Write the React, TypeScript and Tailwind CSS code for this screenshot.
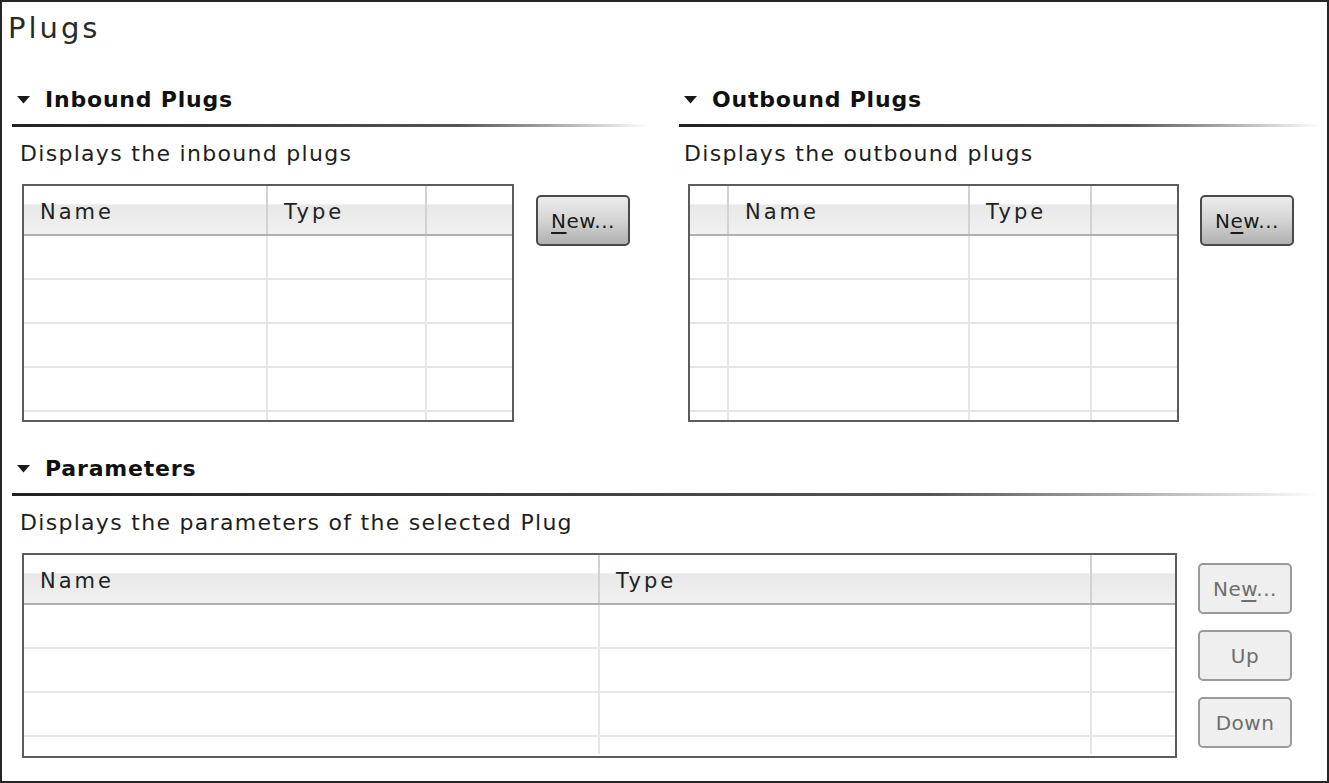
import React from 'react'

const Caret: React.FC = () => (
    <svg width="13" height="8" viewBox="0 0 13 8" className="shrink-0">
        <path d="M0 0 L13 0 L6.5 7.5 Z" fill="#1a1a1a" />
    </svg>
)

const SectionHeader: React.FC<{ title: string }> = ({ title }) => (
    <div>
        <div className="flex items-center h-[28px] pl-[5px] gap-[15px]">
            <Caret />
            <span className="text-[22px] font-bold text-[#111] leading-[28px] tracking-[0.8px]">{title}</span>
        </div>
        <div className="mt-[10px] h-[3px] bg-gradient-to-r from-[#222] via-[#555] via-70% to-transparent" />
    </div>
)

type TableProps = {
    cols: number[]
    labels: string[]
    rows: number
    lastRow: number
    height: number
}

const Table: React.FC<TableProps> = ({ cols, labels, rows, lastRow, height }) => {
    const cell = (i: number, header: boolean, content?: string) => {
        const last = i === cols.length
        return (
            <div
                key={i}
                className={
                    (last ? 'flex-1 ' : 'shrink-0 border-r-2 ') +
                    (header ? 'border-[#d2d2d2] ' : 'border-[#e6e6e6] ') +
                    'h-full flex items-center'
                }
                style={last ? undefined : { width: cols[i] }}
            >
                {content ? (
                    <span className="pl-[16px] pt-[5px] text-[21px] tracking-[3px] text-[#222]">{content}</span>
                ) : null}
            </div>
        )
    }

    return (
        <div className="border-2 border-[#5c5c5c] bg-white flex flex-col overflow-hidden" style={{ height }}>
            <div className="h-[50px] shrink-0 flex border-b-2 border-[#b0b0b0] bg-[linear-gradient(to_bottom,#ffffff_0%,#ffffff_36%,#e8e8e8_40%,#f1f1f1_100%)]">
                {[...cols, 0].map((_, i) => cell(i, true, labels[i]))}
            </div>
            {Array.from({ length: rows }).map((_, r) => (
                <div key={r} className="h-[44px] shrink-0 flex border-b-2 border-[#e6e6e6]">
                    {[...cols, 0].map((_, i) => cell(i, false))}
                </div>
            ))}
            <div className="flex" style={{ height: lastRow }}>
                {[...cols, 0].map((_, i) => cell(i, false))}
            </div>
        </div>
    )
}

const Button: React.FC<{ children: React.ReactNode; disabled?: boolean }> = ({ children, disabled }) => (
    <button
        className={
            'w-[94px] h-[51px] rounded-[5px] border-2 text-[20px] tracking-[0.5px] flex items-center justify-center ' +
            (disabled
                ? 'border-[#9a9a9a] bg-[#efefef] text-[#6e6e6e]'
                : 'border-[#4a4a4a] bg-gradient-to-b from-[#ececec] via-[#d4d4d4] to-[#b0b0b0] text-[#1a1a1a]')
        }
    >
        {children}
    </button>
)

const App: React.FC = () => {
    return (
        <div
            className="w-[1329px] h-[783px] border-2 border-[#262626] bg-white overflow-hidden text-[#1e1e1e]"
            style={{ fontFamily: '"DejaVu Sans", "Noto Sans", sans-serif' }}
        >
            <div className="pl-[6px] pt-[8px] h-[84px] text-[29px] leading-[36px] tracking-[3px] text-[#2a2a2a]">Plugs</div>

            <div className="flex pl-[10px] pr-[6px] gap-[29px]">
                <div className="w-[638px]">
                    <SectionHeader title="Inbound Plugs" />
                    <div className="pl-[8px] mt-[13px] h-[28px] text-[22px] leading-[28px] tracking-[1.3px]">
                        Displays the inbound plugs
                    </div>
                    <div className="flex mt-[16px] pl-[10px] gap-[22px]">
                        <div className="w-[492px]">
                            <Table cols={[244, 159]} labels={['Name', 'Type']} rows={4} lastRow={8} height={238} />
                        </div>
                        <div className="pt-[11px]">
                            <Button>
                                <span><u className="underline-offset-4">N</u>ew...</span>
                            </Button>
                        </div>
                    </div>
                </div>
                <div className="flex-1">
                    <SectionHeader title="Outbound Plugs" />
                    <div className="pl-[5px] mt-[13px] h-[28px] text-[22px] leading-[28px] tracking-[1.3px]">
                        Displays the outbound plugs
                    </div>
                    <div className="flex mt-[16px] pl-[9px] gap-[21px]">
                        <div className="w-[491px]">
                            <Table cols={[39, 241, 122]} labels={['', 'Name', 'Type']} rows={4} lastRow={8} height={238} />
                        </div>
                        <div className="pt-[11px]">
                            <Button>
                                <span>N<u className="underline-offset-4">e</u>w...</span>
                            </Button>
                        </div>
                    </div>
                </div>
            </div>

            <div className="pl-[10px] pr-[6px] mt-[33px]">
                <SectionHeader title="Parameters" />
                <div className="pl-[8px] mt-[13px] h-[28px] text-[22px] leading-[28px] tracking-[1.3px]">
                    Displays the parameters of the selected Plug
                </div>
                <div className="flex mt-[16px] pl-[10px] gap-[21px]">
                    <div className="w-[1155px]">
                        <Table cols={[576, 492]} labels={['Name', 'Type']} rows={3} lastRow={17} height={205} />
                    </div>
                    <div className="pt-[10px] flex flex-col gap-[16px]">
                        <Button disabled>
                            <span>Ne<u className="underline-offset-4">w</u>...</span>
                        </Button>
                        <Button disabled>Up</Button>
                        <Button disabled>Down</Button>
                    </div>
                </div>
            </div>
        </div>
    )
}

export default App
